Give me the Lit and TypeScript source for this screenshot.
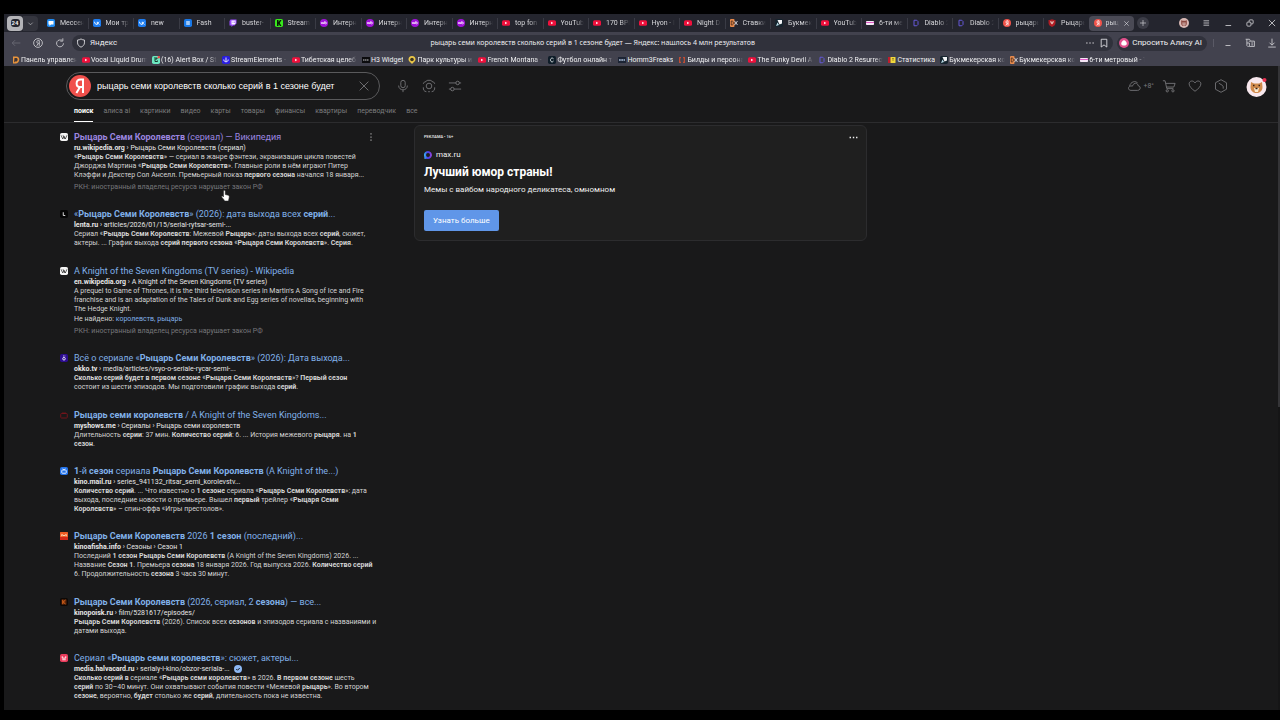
import { LitElement, html, svg, css, nothing } from "lit";
import { customElement } from "lit/decorators.js";
import { unsafeHTML } from "lit/directives/unsafe-html.js";

type Item = { icon: string; text: string };

const fav = (k: string) => {
  const box = (c: string, inner: unknown) => html`<svg class="fav" viewBox="0 0 16 16" aria-hidden="true"><rect width="16" height="16" rx="3.5" fill=${c}></rect>${inner}</svg>`;
  const bare = (inner: unknown) => html`<svg class="fav" viewBox="0 0 16 16" aria-hidden="true">${inner}</svg>`;
  switch (k) {
    case "msg": return box("#1f8af0", svg`<path d="M3 4h10v7H8l-3 3v-3H3z" fill="#fff"/>`);
    case "vk": return box("#1c7cf0", svg`<path d="M3 5.5c.4 4 2.400 5.500 5.500 5.500V5.500M8.500 8.300c2-.3 3-1.300 3.800-2.800M8.500 8.300c2 .2 3.300 1.200 4.200 2.700" fill="none" stroke="#fff" stroke-width="1.800"/>`);
    case "pause": return box("#1878e8", svg`<path d="M5 4h2.200v8H5zM8.800 4H11v8H8.800z" fill="#fff"/>`);
    case "twitch": return bare(svg`<path d="M3 1h12v8l-4 4H8l-3 3v-3H1V4z" fill="#9a4bff"/><path d="M5 3h8v6l-2 2H5z" fill="#fff"/><path d="M8 5v3M11 5v3" stroke="#9a4bff" stroke-width="1.300"/>`);
    case "kick": return box("#38e81c", svg`<path d="M4 2h3v4l3-4h3L9.500 8l3.500 6h-3L7 10v4H4z" fill="#0b1a08"/>`);
    case "wb": return bare(svg`<circle cx="8" cy="8" r="8" fill="#a010d8"/><path d="M2.500 6l1.200 4 1.400-3.200L6.500 10l1.200-4M9.500 4v6M9.500 8.200a1.800 1.800 0 1 1 .1.500" fill="none" stroke="#fff" stroke-width="1.300"/>`);
    case "yt": return bare(svg`<rect y="2.500" width="16" height="11" rx="3" fill="#f0103c"/><path d="M6.300 5.500v5l4.200-2.500z" fill="#fff"/>`);
    case "ox": return bare(svg`<rect x="0" y="0" width="9" height="16" rx="2" fill="#e88a4c"/><path d="M2.500 4v8h2c3 0 3-8 0-8z" fill="none" stroke="#3a2418" stroke-width="1.500"/><path d="M9 4l6 8M15 4l-6 8" stroke="#d8d8e0" stroke-width="1.800"/>`);
    case "bk": return box("#16242e", svg`<path d="M5 2h9v7l-5 2z" fill="#f2f4f6"/><path d="M2 14l3-7 3 5z" fill="#b8dce8"/>`);
    case "six": return bare(svg`<rect y="4" width="16" height="8" rx="1.500" fill="#f5e6f5"/><path d="M0 6h16v2H0z" fill="#e05ac8"/>`);
    case "dia": return bare(svg`<path d="M4 2.500h5.500L12 5v6l-2.500 2.500H4z" fill="none" stroke="#6458d8" stroke-width="2"/>`);
    case "ya": return bare(svg`<circle cx="8" cy="8" r="8" fill="#f2534a"/><path d="M10 13V3.500H8.600C6.500 3.500 6 5 6 6.200 6 8 7.300 8.800 8.600 8.800H10M8 9l-2.400 4" fill="none" stroke="#fff" stroke-width="1.700"/>`);
    case "shield": return bare(svg`<path d="M1 2c3 0 5-.5 7-1.500C10 1.500 12 2 15 2v6c0 4-3 6-7 8-4-2-7-4-7-8z" fill="#b01c24"/><path d="M4 4.500h3v2h2v-2h3L10.500 8 8 11 5.500 8z" fill="#e8c8c0"/>`);
    case "pan": return bare(svg`<path d="M2 1h7c8 0 7 13-1 14H2z" fill="#e8943c"/><path d="M5 4h4c3 0 3 6 0 7H6l-2 2z" fill="#3c3436"/>`);
    case "alert": return box("#6ce8c0", svg`<path d="M4 4h6v2H6v5h5V9" fill="none" stroke="#143c30" stroke-width="2"/><circle cx="13.500" cy="2.500" r="2.500" fill="#f04848"/>`);
    case "se": return box("#2a1ee0", svg`<path d="M8 3v8M3.500 7c0 6 9 6 9 0" fill="none" stroke="#fff" stroke-width="1.800"/>`);
    case "h3": return bare(svg`<rect y="2" width="16" height="12" fill="#0c0c0e"/><path d="M2 8h12" stroke="#c8c8cc" stroke-width="2" stroke-dasharray="3 1"/>`);
    case "park": return bare(svg`<path d="M8 0a7 7 0 0 1 7 7c0 4-4 5-7 9-3-4-7-5-7-9a7 7 0 0 1 7-7z" fill="#ecc848"/><circle cx="8" cy="7" r="3.600" fill="#3a3524"/>`);
    case "foot": return box("#0e1c28", svg`<path d="M11 5.500C8 2.500 4.500 5 5 8.500s4 4.500 6 1.500" fill="none" stroke="#e8f0f0" stroke-width="1.800"/>`);
    case "hf": return bare(svg`<rect y="2" width="16" height="12" fill="#1c2434"/><path d="M2 8h12" stroke="#a8bcd8" stroke-width="3" stroke-dasharray="3.500 1"/>`);
    case "bild": return bare(svg`<path d="M2 2h4v2.500H4.500v7H6V14H2zM14 2h-4v2.500h1.500v7H10V14h4z" fill="#c04c34"/>`);
    case "stat": return bare(svg`<rect x="0" y="2" width="5" height="12" fill="#c01c2c"/><rect x="5" y="2" width="10" height="12" rx="1" fill="#f0d83c"/><path d="M8 5h4M8 8h4" stroke="#806818" stroke-width="1.400"/>`);
    case "wiki": return box("#f4f4f4", svg`<path d="M2 4.500l3.500 7.500L8 6.500l2.500 5.500L14 4.500M6 4.500L10 12" fill="none" stroke="#222" stroke-width="1.400"/>`);
    case "lenta": return box("#050505", svg`<path d="M6.500 4.500v6.500h4" fill="none" stroke="#eee" stroke-width="1.800"/>`);
    case "okko": return box("#2c0c90", svg`<circle cx="8" cy="9.500" r="2.600" fill="none" stroke="#f4f0ff" stroke-width="1.800"/><path d="M6 4h1.600M9 4h1.600" stroke="#f4f0ff" stroke-width="1.800"/>`);
    case "my": return bare(svg`<rect x="1.500" y="5" width="13" height="9" rx="1.500" fill="none" stroke="#7c141c" stroke-width="1.800"/><path d="M5 2l3 3 3-3" fill="none" stroke="#7c141c" stroke-width="1.500"/>`);
    case "mail": return box("#2474ec", svg`<rect x="3.500" y="6" width="9" height="6.500" rx="1.500" fill="none" stroke="#fff" stroke-width="1.700"/><path d="M5.500 3.200L8 6l2.500-2.800" fill="none" stroke="#fff" stroke-width="1.400"/>`);
    case "afisha": return bare(svg`<rect width="16" height="16" rx="1" fill="#ee5c24"/><rect y="10" width="16" height="6" fill="#d02818"/><path d="M3.500 8.500V5L8 7.500 12.500 5v3.500" fill="none" stroke="#ffe8c8" stroke-width="1.800"/>`);
    case "kp": return box("#0c0806", svg`<rect x="3" y="3" width="10" height="10" fill="#5c2408"/><path d="M5.500 3.500v9M11 4L6.500 8l4.500 4" fill="none" stroke="#f07020" stroke-width="1.700"/>`);
    case "halva": return box("#ea3c5c", svg`<path d="M4.500 4.500v3.800h7V4.500M4.500 11.500h7" fill="none" stroke="#fff" stroke-width="1.800"/>`);
    default: return nothing;
  }
};

const TABS: Item[] = [
  ["msg", "Мессен"], ["vk", "Мои тр"], ["vk", "new"], ["pause", "Fash"], ["twitch", "buster-"],
  ["kick", "Stream"], ["wb", "Интерн"], ["wb", "Интерн"], ["wb", "Интерн"], ["wb", "Интерн"],
  ["yt", "top fon"], ["yt", "YouTub"], ["yt", "170 BPI"], ["yt", "Hyon - I"], ["yt", "Night D"],
  ["ox", "Ставки"], ["bk", "Букмек"], ["yt", "YouTub"], ["six", "6-ти ме"], ["dia", "Diablo 2"],
  ["dia", "Diablo 2"], ["ya", "рыцарь"], ["shield", "Рыцарь"],
].map(([icon, text]) => ({ icon, text }));

const MARKS: Item[] = [
  ["pan", "Панель управлен"], ["yt", "Vocal Liquid Drum"], ["alert", "(16) Alert Box / St"], ["se", "StreamElements -"],
  ["yt", "Тибетская целеб"], ["h3", "H3 Widget"], ["park", "Парк культуры и"], ["yt", "French Montana -"],
  ["foot", "Футбол онлайн т"], ["hf", "Homm3Freaks"], ["bild", "Билды и персона"], ["yt", "The Funky Devil A"],
  ["dia", "Diablo 2 Resurrect"], ["stat", "Статистика"], ["bk", "Букмекерская ко"], ["ox", "Букмекерская ко"], ["six", "6-ти метровый - Т"],
].map(([icon, text]) => ({ icon, text }));

type Result = { icon: string; title: string; host: string; path: string; lines: string[]; missing?: boolean; rkn?: boolean; visited?: boolean; ok?: boolean };
const RESULTS: Result[] = [
  { icon: "wiki", visited: true, rkn: true, title: "<b>Рыцарь Семи Королевств</b> (сериал) — Википедия", host: "ru.wikipedia.org", path: "Рыцарь Семи Королевств (сериал)",
    lines: ["«<b>Рыцарь Семи Королевств</b>» — сериал в жанре фэнтези, экранизация цикла повестей", "Джорджа Мартина «<b>Рыцарь Семи Королевств</b>». Главные роли в нём играют Питер", "Клэффи и Декстер Сол Анселл. Премьерный показ <b>первого сезона</b> начался 18 января..."] },
  { icon: "lenta", title: "«<b>Рыцарь Семи Королевств</b>» (2026): дата выхода всех <b>серий</b>...", host: "lenta.ru", path: "articles/2026/01/15/serial-rytsar-semi-...",
    lines: ["Сериал «<b>Рыцарь Семи Королевств</b>: Межевой <b>Рыцарь</b>»: даты выхода всех <b>серий</b>, сюжет,", "актеры. ... График выхода <b>серий первого сезона</b> «<b>Рыцаря Семи Королевств</b>». <b>Серия</b>."] },
  { icon: "wiki", missing: true, rkn: true, title: "A Knight of the Seven Kingdoms (TV series) - Wikipedia", host: "en.wikipedia.org", path: "A Knight of the Seven Kingdoms (TV series)",
    lines: ["A prequel to Game of Thrones, it is the third television series in Martin's A Song of Ice and Fire", "franchise and is an adaptation of the Tales of Dunk and Egg series of novellas, beginning with", "The Hedge Knight."] },
  { icon: "okko", title: "Всё о сериале «<b>Рыцарь Семи Королевств</b>» (2026): Дата выхода...", host: "okko.tv", path: "media/articles/vsyo-o-seriale-rycar-semi-...",
    lines: ["<b>Сколько серий будет в первом сезоне</b> «<b>Рыцаря Семи Королевств</b>»? <b>Первый сезон</b>", "состоит из шести эпизодов. Мы подготовили график выхода <b>серий</b>."] },
  { icon: "my", title: "<b>Рыцарь семи королевств</b> / A Knight of the Seven Kingdoms...", host: "myshows.me", path: "Сериалы › Рыцарь семи королевств",
    lines: ["Длительность <b>серии</b>: 37 мин. <b>Количество серий</b>: 6. ... История межевого <b>рыцаря</b>. на <b>1</b>", "<b>сезон</b>."] },
  { icon: "mail", title: "<b>1</b>-й <b>сезон</b> сериала <b>Рыцарь Семи Королевств</b> (A Knight of the...)", host: "kino.mail.ru", path: "series_941132_ritsar_semi_korolevstv...",
    lines: ["<b>Количество серий</b>. ... Что известно о <b>1 сезоне</b> сериала «<b>Рыцарь Семи Королевств</b>»: дата", "выхода, последние новости о премьере. Вышел <b>первый</b> трейлер «<b>Рыцаря Семи</b>", "<b>Королевств</b>» – спин-оффа «Игры престолов»."] },
  { icon: "afisha", title: "<b>Рыцарь Семи Королевств</b> 2026 <b>1 сезон</b> (последний)...", host: "kinoafisha.info", path: "Сезоны › Сезон 1",
    lines: ["Последний <b>1 сезон Рыцарь Семи Королевств</b> (A Knight of the Seven Kingdoms) 2026. ...", "Название <b>Сезон 1</b>. Премьера <b>сезона</b> 18 января 2026. Год выпуска 2026. <b>Количество серий</b>", "6. Продолжительность <b>сезона</b> 3 часа 30 минут."] },
  { icon: "kp", title: "<b>Рыцарь Семи Королевств</b> (2026, сериал, 2 <b>сезона</b>) — все...", host: "kinopoisk.ru", path: "film/5281617/episodes/",
    lines: ["<b>Рыцарь Семи Королевств</b> (2026). Список всех <b>сезонов</b> и эпизодов сериала с названиями и", "датами выхода."] },
  { icon: "halva", ok: true, title: "Сериал «<b>Рыцарь семи королевств</b>»: сюжет, актеры...", host: "media.halvacard.ru", path: "serialy-i-kino/obzor-seriala-...",
    lines: ["<b>Сколько серий в</b> сериале «<b>Рыцарь семи королевств</b>» в 2026. <b>В первом сезоне</b> шесть", "<b>серий</b> по 30–40 минут. Они охватывают события повести «Межевой <b>рыцарь</b>». Во втором", "<b>сезоне</b>, вероятно, <b>будет</b> столько же <b>серий</b>, длительность пока не известна."] },
];

const ico = (cls: string, d: unknown, vb = "0 0 16 16") => html`<svg class="ico ${cls}" viewBox=${vb} aria-hidden="true">${d}</svg>`;
const X = svg`<path d="M3 3l10 10M13 3L3 13"/>`;

@customElement("browser-chrome")
export class BrowserChrome extends LitElement {
  static styles = css`
    :host { display: block; color: #d6d6da; font-family: Roboto, "Noto Sans", sans-serif; font-size: 7px; line-height: 10px; }
    * { box-sizing: border-box; }
    button { all: unset; box-sizing: border-box; display: flex; align-items: center; justify-content: center; white-space: nowrap; }
    a { color: inherit; text-decoration: none; }
    .ico { width: 10px; height: 10px; fill: none; stroke: currentColor; stroke-width: 1.3; display: block; }
    .fav { width: 8px; height: 8px; flex: none; display: block; }
    .tabs { display: flex; align-items: center; height: 18px; background: #24252e; }
    .count { width: 16px; height: 15px; border-radius: 4px; background: #b4b4b8; margin-left: 3px; }
    .count span { width: 9px; height: 8px; border-radius: 3px; background: #24252e; color: #f0f0f0; font-size: 6px; font-weight: 700; line-height: 8px; text-align: center; }
    .caret { width: 15px; height: 15px; border-radius: 0 4px 4px 0; background: #34353e; margin-right: 4px; }
    .caret .ico { width: 7px; height: 7px; }
    .strip { flex: 1; display: flex; min-width: 0; }
    .tab { flex: 1 1 0; min-width: 0; display: flex; align-items: center; gap: 5px; height: 15px; padding: 0 4px 0 5px; position: relative; }
    .tab + .tab::before { content: ""; position: absolute; left: 0; top: 2px; bottom: 2px; width: 1px; background: #3a3b45; }
    .tab.on { background: #4a4a55; border-radius: 4px; gap: 4px; }
    .tab.on::before { display: none; }
    .fade { flex: 1; min-width: 0; overflow: hidden; white-space: nowrap; -webkit-mask-image: linear-gradient(90deg, #000 60%, transparent); mask-image: linear-gradient(90deg, #000 60%, transparent); }
    .tab.on .ico { width: 7px; height: 7px; flex: none; color: #e8e8ec; }
    .plus { width: 12px; height: 12px; border-radius: 6px; background: #3c3d47; margin-left: 3px; }
    .plus .ico { width: 8px; height: 8px; }
    .win { display: flex; align-items: center; gap: 12px; margin-left: 30px; padding-right: 3px; }
    .win .ava { width: 10px; height: 10px; display: block; }
    .tools { display: flex; align-items: center; height: 22px; background: #42424e; padding: 0 3px 0 7px; }
    .nav { display: flex; gap: 12px; margin-right: 7px; }
    .nav .dim { color: #6c6c78; }
    .addr { flex: 1; display: grid; grid-template-columns: 1fr auto 1fr; align-items: center; height: 16px; border-radius: 8px; background: #30313b; padding: 0 4px; font-size: 8px; color: #ececf0; white-space: nowrap; }
    .addr div { display: flex; align-items: center; gap: 4px; }
    .addr .title { font-family: "Noto Sans", sans-serif; font-size: 7px; }
    .addr .end { justify-content: flex-end; }
    .alice { height: 15px; padding: 0 5px 0 2px; gap: 3px; border-radius: 8px; background: #30313b; font-size: 8px; margin-left: 4px; color: #f2f2f4; }
    .alice .ico { stroke: none; }
    .side { display: flex; align-items: center; gap: 12px; margin-left: 6px; padding-left: 9px; border-left: 1px solid #5a5a66; height: 8px; }
    .marks { display: flex; align-items: center; height: 12px; background: #42424e; padding-left: 8px; gap: 5px; }
    .mark { display: flex; align-items: center; gap: 1px; width: 65px; }
    .mark.fit { width: auto; }
    .mark .fade { color: #f0f0f2; -webkit-mask-image: linear-gradient(90deg, #000 85%, transparent); mask-image: linear-gradient(90deg, #000 85%, transparent); }
    .mark.fit .fade { -webkit-mask-image: none; mask-image: none; }
  `;
  render() {
    const fit = new Set(["H3 Widget", "Homm3Freaks", "Статистика"]);
    return html`
      <div class="tabs">
        <button class="count" aria-label="24 вкладки"><span>24</span></button>
        <button class="caret" aria-label="Список вкладок">${ico("", svg`<path d="M3 6l5 5 5-5"/>`)}</button>
        <div class="strip">
          ${TABS.map((t) => html`<a class="tab" href="#">${fav(t.icon)}<span class="fade">${t.text}</span></a>`)}
          <a class="tab on" href="#">${fav("ya")}<span class="fade">рыц</span>${ico("", X)}</a>
        </div>
        <button class="plus" aria-label="Новая вкладка">${ico("", svg`<path d="M8 2v12M2 8h12"/>`)}</button>
        <div class="win">
          <svg class="ava" viewBox="0 0 16 16" aria-hidden="true"><circle cx="8" cy="8" r="8" fill="#d8b8b4"/><path d="M3.500 3.500L6 4.500h4l2.500-1V9c0 5-9 5-9 0z" fill="#8c4840"/><path d="M6.500 7v3.500c0 1.500 3 1.500 3 0V7" fill="none" stroke="#f4e4e0" stroke-width="1.300"/></svg>
          <button aria-label="Меню">${ico("", svg`<path d="M4 4.500h9M4 8h9M4 11.500h9"/>`)}</button>
          <button aria-label="Свернуть">${ico("", svg`<path d="M4 12h9"/>`)}</button>
          <button aria-label="Окно">${ico("", svg`<rect x="3" y="6.500" width="6.500" height="6.500" rx="1.500"/><path d="M6.500 6V4.500C6.500 3.500 7 3 8 3h3.500c1 0 1.500.5 1.500 1.500V8c0 1-.5 1.500-1.500 1.500H10"/>`)}</button>
          <button aria-label="Закрыть">${ico("", X)}</button>
        </div>
      </div>
      <div class="tools">
        <div class="nav">
          <button class="dim" aria-label="Назад">${ico("", svg`<path d="M15 8H2M6.500 3.500L2 8l4.500 4.500"/>`)}</button>
          <button aria-label="Яндекс">${ico("", svg`<circle cx="8" cy="8" r="7"/><path d="M10 12.500V4H8.600C6.800 4 6.200 5 6.200 6.300 6.200 7.800 7.300 8.500 8.600 8.500H10M8.200 8.800L6 12.500"/>`)}</button>
          <button aria-label="Обновить">${ico("", svg`<path d="M13.500 8.500A5.500 5.500 0 1 1 9 3.200h2M12.500.5v4.500h-4"/>`)}</button>
        </div>
        <div class="addr">
          <div>${ico("", svg`<path d="M8 1.500c2 1.300 3.500 1.600 5.500 1.700v4.500c0 3.500-2.500 5.500-5.500 7-3-1.500-5.500-3.500-5.500-7V3.200C4.500 3.100 6 2.800 8 1.500z"/>`)}<span>Яндекс</span></div>
          <span class="title">рыцарь семи королевств сколько серий в 1 сезоне будет — Яндекс: нашлось 4 млн результатов</span>
          <div class="end">
            <button aria-label="Ещё">${ico("", svg`<path d="M2 8h2M7 8h2M12 8h2" stroke-width="1.800"/>`)}</button>
            <button aria-label="В закладки">${ico("", svg`<path d="M3.500 2h9v12.500L8 11l-4.500 3.500z"/>`)}</button>
          </div>
        </div>
        <button class="alice">${ico("", svg`<circle cx="8" cy="8" r="8" fill="#e0508c"/><path d="M8 3.500c2 0 4.500 3.500 4.500 5.500S10 12 8 12s-4.500-1-4.500-3S6 3.500 8 3.500z" fill="#fff"/>`)}Спросить Алису AI</button>
        <div class="side">
          <button aria-label="Панель">${ico("", svg`<path d="M4 12h8"/>`)}</button>
          <button aria-label="Расширения">${ico("", svg`<path d="M1 2h6l2 2M3 2v10l2 2 1-1M6 5h9v8.500H7V8H3M10 8h3M10 11h3"/>`)}</button>
          <button aria-label="Загрузки">${ico("", svg`<path d="M8 1v10M4 7.500L8 11.500 12 7.500M2 14.500h12"/>`)}</button>
        </div>
      </div>
      <nav class="marks">
        ${MARKS.map((m) => html`<a class="mark ${fit.has(m.text) ? "fit" : ""}" href="#">${fav(m.icon)}<span class="fade">${m.text}</span></a>`)}
      </nav>`;
  }
}

@customElement("search-page")
export class SearchPage extends LitElement {
  static styles = css`
    :host { display: flex; flex-direction: column; position: relative; min-height: 0; background: #19191a; color: #d4d4d4; font-family: Roboto, "Noto Sans", sans-serif; font-size: 7px; line-height: 9px; border-right: 2px solid #151516; }
    * { box-sizing: border-box; }
    button { all: unset; box-sizing: border-box; display: flex; align-items: center; justify-content: center; }
    a { color: inherit; text-decoration: none; }
    .thumb { position: absolute; top: 0; right: -2px; width: 2px; height: 53%; background: #343437; }
    .ico { width: 14px; height: 14px; fill: none; stroke: currentColor; stroke-width: 1; display: block; }
    .fav { width: 8px; height: 8px; flex: none; display: block; margin-top: 2px; }
    header { padding: 6px 11px 0 62px; border-bottom: 1px solid #2c2c2e; height: 57px; display: flex; flex-direction: column; }
    .top { display: flex; align-items: center; color: #77777a; }
    .box { display: flex; align-items: center; width: 314px; height: 28px; border: 1px solid #5a5a5c; border-radius: 14px; padding: 0 8px 0 2px; }
    .box .logo { width: 22px; height: 22px; flex: none; stroke: none; }
    .box input { all: unset; flex: 1; min-width: 0; margin-left: 6px; font-family: "Liberation Sans", Arial, sans-serif; font-size: 9px; line-height: 14px; color: #fff; }
    .acts { display: flex; gap: 12px; margin-left: 16px; }
    .user { display: flex; align-items: center; gap: 12px; margin-left: auto; }
    .temp { display: flex; align-items: center; gap: 2px; font-size: 7px; margin-right: -4px; }
    .face { width: 21px; height: 21px; display: block; margin-left: 6px; }
    .cats { display: flex; gap: 10px; margin: auto 0 0 8px; height: 17px; color: #7c7c7e; line-height: 12px; }
    .cats .on { color: #fff; font-weight: 700; border-bottom: 1px solid #fff; }
    main { flex: 1; min-height: 0; display: flex; align-items: flex-start; }
    .list { width: 316px; align-self: stretch; margin: 0 0 0 56px; padding: 8px 0 9px; display: flex; flex-direction: column; justify-content: space-between; list-style: none; }
    .res { display: flex; gap: 6px; position: relative; white-space: nowrap; }
    .res h2 { margin: 0; font-size: 9px; line-height: 12px; font-weight: 400; color: #80b0e8; }
    .res b { font-weight: 700; }
    .res .seen { color: #9c86e0; }
    .url { line-height: 10px; color: #e6e6e6; display: flex; align-items: center; gap: 4px; }
    .url .fav { margin: 0; }
    .text { margin: 0; }
    .miss { line-height: 10px; }
    .miss a { color: #80b0e8; }
    .rkn { margin-top: 2px; line-height: 10px; color: #77777a; }
    .kebab { position: absolute; right: 0; top: 1px; color: #a0a0a2; }
    .kebab .ico { width: 10px; height: 10px; }
    .ad { width: 453px; margin: 2px 0 0 38px; padding: 8px 8px 9px 9px; border: 1px solid #2c2c2e; border-radius: 6px; background: #1f1f1f; color: #f0f0f0; display: flex; flex-direction: column; align-items: flex-start; }
    .ad .row { display: flex; align-self: stretch; justify-content: space-between; align-items: center; height: 6px; font-size: 4px; line-height: 6px; font-weight: 500; }
    .ad .row .ico { width: 9px; height: 9px; }
    .ad .host { display: flex; align-items: center; gap: 4px; margin-top: 9px; font-size: 8px; line-height: 12px; }
    .ad .host .fav { margin: 0; }
    .ad h3 { margin: 3px 0 0; font-size: 12px; line-height: 16px; color: #fff; }
    .ad p { margin: 4px 0 0; font-size: 8px; line-height: 12px; }
    .ad .go { margin-top: 14px; height: 21px; padding: 0 9px; border-radius: 2px; background: #6096e8; color: #fff; font-size: 8px; }
    .hand { position: absolute; left: 217px; top: 124px; width: 9px; height: 12px; }
  `;
  render() {
    return html`
      <header>
        <div class="top">
          <form class="box" role="search">
            <svg class="logo" viewBox="0 0 22 22" aria-hidden="true"><circle cx="11" cy="11" r="11" fill="#f0504c"/><path d="M14 18V4.500h-2.200c-2.900 0-4.200 1.800-4.200 3.900 0 2.400 1.500 3.700 4 3.700H14M11 12l-3.600 6" fill="none" stroke="#fff" stroke-width="2"/></svg>
            <input type="text" aria-label="Запрос" value="рыцарь семи королевств сколько серий в 1 сезоне будет">
            <button type="button" aria-label="Очистить">${ico("", svg`<path d="M3 3l10 10M13 3L3 13"/>`)}</button>
          </form>
          <div class="acts">
            <button aria-label="Голос">${ico("", svg`<rect x="5.500" y="1.500" width="5" height="8.500" rx="2.500"/><path d="M3 7.500c0 6.500 10 6.500 10 0M8 12.500V15"/>`)}</button>
            <button aria-label="По картинке">${ico("", svg`<circle cx="8" cy="8" r="3.200"/><path d="M1.500 5.500C2 3.500 3 3.300 4.500 3 5 1.500 6 1.500 8 1.500s3 0 3.500 1.500c1.500.3 2.500.5 3 2.500M1.500 9.500c0 3 .5 4.500 3.500 5M14.500 9.500c0 3-.5 4.500-3.500 5M7 14.500h2"/>`)}</button>
            <button aria-label="Фильтры">${ico("", svg`<circle cx="11" cy="4.500" r="2"/><circle cx="5" cy="11.500" r="2"/><path d="M1 4.500h8M13 4.500h2M1 11.500h2M7 11.500h8"/>`)}</button>
          </div>
          <div class="user">
            <a class="temp" href="#">${ico("", svg`<path d="M4.500 13h7.500c4 0 4-5 .8-5.300C12.500 5 10 4 8 5.500 6.500 6.500 6.500 8 6.500 8 .5 7 .5 13 4.500 13zM3 8C4 3 10 1.500 12 4.500"/>`)}+8°</a>
            <a href="#" aria-label="Корзина">${ico("", svg`<path d="M1 2h2.500l2 9H13M4.200 5H15l-1.500 4.200H5.200"/><circle cx="6" cy="13.500" r="1.300"/><circle cx="12.500" cy="13.500" r="1.300"/>`)}</a>
            <a href="#" aria-label="Избранное">${ico("", svg`<path d="M8 14C4 11 1.300 8.500 1.300 5.500 1.300 2 6 1 8 4.500 10 1 14.700 2 14.700 5.500 14.700 8.500 12 11 8 14z"/>`)}</a>
            <a href="#" aria-label="Заказы">${ico("", svg`<path d="M8 .8l6.300 3.500v7.400L8 15.200 1.700 11.700V4.300zM5.500 4.800L9.500 7.200c.8.500 1 1 1 1.800v2"/>`)}</a>
            <svg class="face" viewBox="0 0 21 21" aria-hidden="true"><circle cx="10.500" cy="11" r="10" fill="#f8e8ee"/><path d="M5 6l3 1.500h5L16 6l.5 5c0 4-3 6-6 6s-6-2-6-6z" fill="#d08a4c"/><path d="M8 12h5l-1 4H9z" fill="#fbe8cc"/><path d="M7 9.500h1.500M12.500 9.500H14M9.500 12.500h2" stroke="#3a2014" stroke-width="1.400"/><circle cx="18.500" cy="4" r="2" fill="#e83050"/></svg>
          </div>
        </div>
        <nav class="cats">
          ${["поиск", "алиса ai", "картинки", "видео", "карты", "товары", "финансы", "квартиры", "переводчик", "все"].map((c, i) => html`<a class=${i ? "" : "on"} href="#">${c}</a>`)}
        </nav>
      </header>
      <main>
        <ul class="list">
          ${RESULTS.map((r, i) => html`<li class="res">${fav(r.icon)}
            <div>
              <h2><a class=${r.visited ? "seen" : ""} href="#">${unsafeHTML(r.title)}</a></h2>
              <div class="url"><span><b>${r.host}</b> › ${r.path}</span>${r.ok ? html`<svg class="fav" viewBox="0 0 16 16" aria-hidden="true"><circle cx="8" cy="8" r="8" fill="#8cb8f4"/><path d="M4.500 8l2.500 2.500 4.500-4.500" fill="none" stroke="#19191a" stroke-width="2"/></svg>` : nothing}</div>
              <p class="text">${r.lines.map((l, n) => html`${n ? html`<br>` : nothing}${unsafeHTML(l)}`)}</p>
              ${r.missing ? html`<div class="miss">Не найдено: <a href="#">королевств, рыцарь</a></div>` : nothing}
              ${r.rkn ? html`<div class="rkn">РКН: иностранный владелец ресурса нарушает закон РФ</div>` : nothing}
            </div>
            ${i === 0 ? html`<button class="kebab" aria-label="Действия">${ico("", svg`<path d="M8 2v2M8 7v2M8 12v2" stroke-width="2"/>`)}</button>` : nothing}
          </li>`)}
        </ul>
        <aside class="ad">
          <div class="row"><span>РЕКЛАМА • 16+</span><button aria-label="Ещё">${ico("", svg`<path d="M1 8h2.500M6.800 8h2.500M12.500 8H15" stroke-width="2.400"/>`)}</button></div>
          <a class="host" href="#"><svg class="fav" viewBox="0 0 16 16" aria-hidden="true"><defs><linearGradient id="g"><stop offset="0" stop-color="#38b8f8"/><stop offset=".5" stop-color="#4838e8"/><stop offset="1" stop-color="#9a48e0"/></linearGradient></defs><path d="M8 0a8 8 0 1 1-3 15.500L1 16 .5 11A8 8 0 0 1 8 0zm0 4a4 4 0 1 0 .1 8A4 4 0 0 0 8 4z" fill="url(#g)"/></svg>max.ru</a>
          <h3>Лучший юмор страны!</h3>
          <p>Мемы с вайбом народного деликатеса, омномном</p>
          <button class="go">Узнать больше</button>
        </aside>
      </main>
      <div class="thumb"></div>
      <svg class="hand" viewBox="0 0 18 24" aria-hidden="true"><path d="M5 2c0-2 3.500-2 3.500 0v7l6 1.500c1.500.5 2 1.500 2 3C16.500 17 15 19 15 22H7c0-3-5-6-6-9 0-1.500 2.500-1.500 4 1z" fill="#fff" stroke="#222" stroke-width="1"/></svg>`;
  }
}

@customElement("app-root")
export class AppRoot extends LitElement {
  static styles = css`
    :host { display: flex; flex-direction: column; box-sizing: border-box; height: 100vh; padding: 14px 0 10px 4px; background: #000; position: relative; overflow: hidden; }
    search-page { flex: 1; }
  `;
  render() {
    return html`<browser-chrome></browser-chrome><search-page></search-page>`;
  }
}
